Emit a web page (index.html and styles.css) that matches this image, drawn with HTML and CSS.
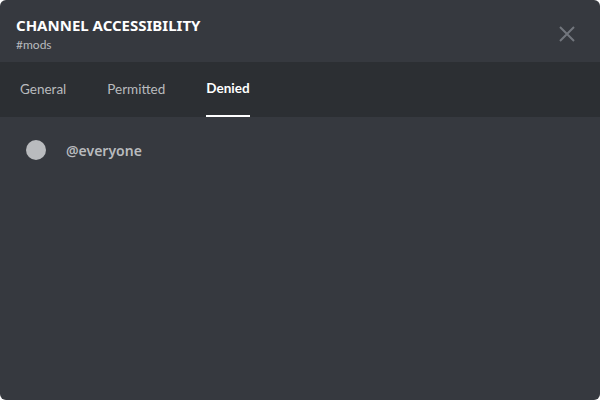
FILE: index.html
```html
<!DOCTYPE html>
<html>
<head>
<meta charset="utf-8">
<link rel="stylesheet" href="styles.css">
</head>
<body>
<div class="modal">
  <header class="header">
    <div class="titles">
      <h1 class="title">CHANNEL ACCESSIBILITY</h1>
      <div class="subtitle">#mods</div>
    </div>
    <button class="close" aria-label="Close">
      <svg width="16" height="16" viewBox="0 0 16 16"><path d="M1 1 L15 15 M15 1 L1 15" stroke="#72767d" stroke-width="2" fill="none"/></svg>
    </button>
  </header>
  <nav class="tabs">
    <div class="tab">General</div>
    <div class="tab">Permitted</div>
    <div class="tab active">Denied</div>
  </nav>
  <section class="content">
    <div class="row">
      <span class="dot"></span>
      <span class="name">@everyone</span>
    </div>
  </section>
</div>
</body>
</html>
```
FILE: styles.css
```css
html, body { margin: 0; padding: 0; background: #ffffff; }
body { width: 600px; height: 400px; font-family: "Noto Sans", "Open Sans", sans-serif; }
.modal {
  width: 600px; height: 400px; background: #36393f; border-radius: 6px;
  overflow: hidden; display: flex; flex-direction: column;
}
.header {
  height: 62px; box-sizing: border-box; padding: 15px 25px 0 16px;
  display: flex; justify-content: space-between; align-items: flex-start;
}
.title { margin: 0; font-size: 15px; font-weight: 700; color: #ffffff; line-height: 20px; letter-spacing: 0; }
.subtitle { font-family: Lato, "Noto Sans", sans-serif; font-size: 12px; color: #b9bbbe; line-height: 16px; margin-top: 2px; }
.close { background: none; border: 0; padding: 0; margin: 11px 0 0 0; width: 16px; height: 16px; cursor: pointer; }
.close svg { display: block; }
.tabs {
  height: 55px; background: #2c2f33; display: flex; padding-left: 20px; gap: 41px; box-sizing: border-box;
}
.tab {
  font-family: Lato, "Noto Sans", sans-serif;
  font-size: 13.5px; color: #b9bbbe; line-height: 55px; box-sizing: border-box;
}
.tab.active { color: #ffffff; font-weight: 700; border-bottom: 2px solid #ffffff; line-height: 53px; }
.content { padding: 23px 26px; }
.row { display: flex; align-items: center; gap: 20px; }
.dot { width: 20px; height: 20px; border-radius: 50%; background: #b9bbbe; }
.name { font-size: 14px; font-weight: 600; color: #b9bbbe; }
```
